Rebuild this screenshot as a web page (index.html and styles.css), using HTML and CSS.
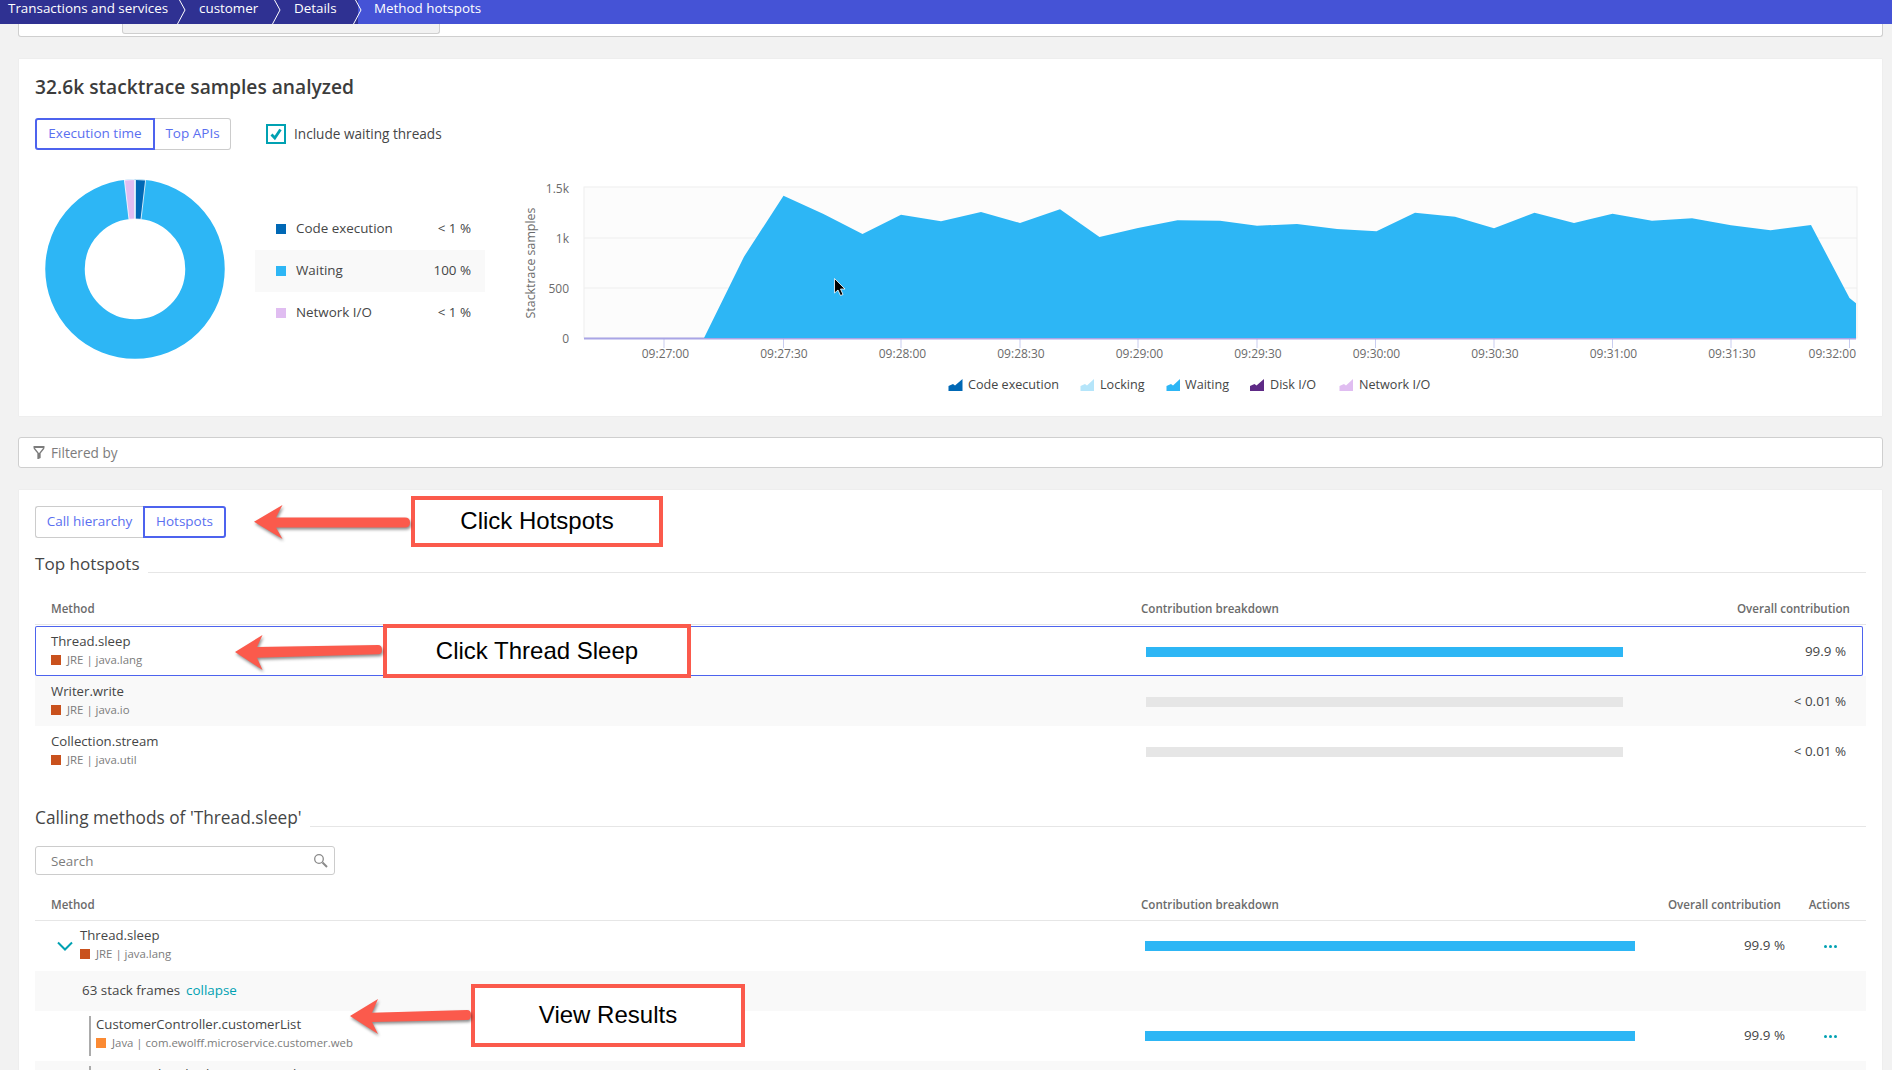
FILE: index.html
```html
<!DOCTYPE html>
<html>
<head>
<meta name="viewport" content="width=device-width, initial-scale=1.0">
<title>Method hotspots</title>
<link rel="stylesheet" href="styles.css">
</head>

<body>

<!-- breadcrumb bar -->
<div class="topbar">
  <div class="crumb crumb-first">Transactions and services</div>
  <div class="crumb crumb-second">customer</div>
  <div class="crumb crumb-third">Details</div>
  <div class="crumb crumb-last">Method hotspots</div>
  <svg class="crumb-lines" width="400" height="24" viewBox="0 0 400 24">
    <path d="M179.500 0L185 10L177.500 24M274.500 0L280 10L272.500 24M355.500 0L361 10L353.500 24" fill="none" stroke="#fff" stroke-width="1"/>
  </svg>
</div>

<div class="page">

  <div class="stub"><div class="stub-chip"></div></div>

  <!-- samples card -->
  <div class="card card-samples">
    <h2 class="card-title">32.6k stacktrace samples analyzed</h2>

    <div class="controls">
      <div class="tabs">
        <div class="tab tab-exec active">Execution time</div>
        <div class="tab tab-apis">Top APIs</div>
      </div>
      <label class="check">
        <span class="checkbox">
          <svg width="16" height="16" viewBox="0 0 16 16"><path d="M3.500 8.500L6.800 12L12.500 3.500" fill="none" stroke="#00a1b2" stroke-width="2.800"/></svg>
        </span>
        <span class="check-label">Include waiting threads</span>
      </label>
    </div>

    <div class="samples-body">
      <svg class="donut" width="180" height="180" viewBox="-90 -90 180 180">
        <circle cx="0" cy="0" r="70" fill="none" stroke="#2db6f5" stroke-width="39.500"/>
        <path d="M0.500 -89.500L10.600 -88.900L6 -49.700L0.400 -50Z" fill="#0068b5" stroke="#fff" stroke-width="0.800"/>
        <path d="M-0.500 -89.500L-10.600 -88.900L-6 -49.700L-0.400 -50Z" fill="#e0bdf1" stroke="#fff" stroke-width="0.800"/>
      </svg>

      <div class="legend">
        <div class="legend-row"><span class="swatch swatch-code"></span><span class="legend-name">Code execution</span><span class="legend-val">&lt; 1 %</span></div>
        <div class="legend-row legend-hover"><span class="swatch swatch-wait"></span><span class="legend-name">Waiting</span><span class="legend-val">100 %</span></div>
        <div class="legend-row"><span class="swatch swatch-net"></span><span class="legend-name">Network I/O</span><span class="legend-val">&lt; 1 %</span></div>
      </div>

      <svg class="chart" width="1382" height="266" viewBox="500 150 1382 266">
        <rect x="584" y="187" width="1273" height="151" fill="#fcfcfc" stroke="#eeeeee"/>
        <path d="M584 238H1857M584 288H1857" stroke="#eeeeee" fill="none"/>
        <path d="M664 339V348M783.500 339V348M901 339V348M1020 339V348M1138 339V348M1257 339V348M1375.500 339V348M1494 339V348M1612.500 339V348M1731 339V348M1849.500 339V348" stroke="#c9cdf0" fill="none"/>
        <path d="M584 338.500H1856" stroke="#a9a5e6" stroke-width="2" fill="none"/>
        <polygon fill="#2db6f5" points="704,338 744,256.700 783.500,195.700 823.500,214 862.500,234 901,214.700 941,221.300 981,212 1020,223 1060,209.300 1099.500,237 1138,228 1177.500,220.300 1220,220.700 1257,225.700 1297,224 1337,229 1376.500,231.300 1415,212.700 1455,216.700 1494,228.300 1534.500,212.700 1574,223 1612.500,213.700 1652,220.700 1692,218.300 1731,225.300 1770.500,230.300 1811,225 1849.500,298 1856,303.300 1856,338"/>
        <path d="M834.500 278.500V293L838 290L840.500 295.500L843 294.500L840.500 289H845Z" fill="#000" stroke="#fff" stroke-width="0.800"/>

        <g class="axis">
          <text x="569" y="193" text-anchor="end">1.5k</text>
          <text x="569" y="243" text-anchor="end">1k</text>
          <text x="569" y="293" text-anchor="end">500</text>
          <text x="569" y="343" text-anchor="end">0</text>
          <text class="axis-title" transform="translate(535 263) rotate(-90)" text-anchor="middle">Stacktrace samples</text>
          <text x="665.500" y="358" text-anchor="middle">09:27:00</text>
          <text x="784" y="358" text-anchor="middle">09:27:30</text>
          <text x="902.500" y="358" text-anchor="middle">09:28:00</text>
          <text x="1021" y="358" text-anchor="middle">09:28:30</text>
          <text x="1139.500" y="358" text-anchor="middle">09:29:00</text>
          <text x="1258" y="358" text-anchor="middle">09:29:30</text>
          <text x="1376.500" y="358" text-anchor="middle">09:30:00</text>
          <text x="1495" y="358" text-anchor="middle">09:30:30</text>
          <text x="1613.500" y="358" text-anchor="middle">09:31:00</text>
          <text x="1732" y="358" text-anchor="middle">09:31:30</text>
          <text x="1856" y="358" text-anchor="end">09:32:00</text>
        </g>

        <g class="chart-legend">
          <path d="M948.500 391V386L953 384L955 385.500L962.500 379V391Z" fill="#0068b5"/>
          <text x="968" y="389">Code execution</text>
          <path d="M1080.500 391V386L1085 384L1087 385.500L1094 379V391Z" fill="#b5e5fa"/>
          <text x="1100" y="389">Locking</text>
          <path d="M1166.500 391V386L1171 384L1173 385.500L1180 379V391Z" fill="#2db6f5"/>
          <text x="1185" y="389">Waiting</text>
          <path d="M1250 391V386L1254.500 384L1256.500 385.500L1264 379V391Z" fill="#5e2a86"/>
          <text x="1270" y="389">Disk I/O</text>
          <path d="M1339.500 391V386L1344 384L1346 385.500L1353 379V391Z" fill="#e0bdf1"/>
          <text x="1359" y="389">Network I/O</text>
        </g>
      </svg>
    </div>
  </div>

  <!-- filter -->
  <div class="filter">
    <svg width="12" height="13" viewBox="0 0 12 13"><path d="M0.500 1H11.500" stroke="#7c7c7c" stroke-width="2" fill="none"/><path d="M1 2L5 7V12.500L7 11.500V7L11 2" fill="none" stroke="#7c7c7c" stroke-width="1.300"/><path d="M5 7H7V11.500L5 12.500Z" fill="#7c7c7c"/></svg>
    <span>Filtered by</span>
  </div>

  <!-- hotspots card -->
  <div class="card card-hotspots">
    <div class="tabs">
      <div class="tab tab-call">Call hierarchy</div>
      <div class="tab tab-hot active">Hotspots</div>
    </div>

    <div class="section-title section-top"><span>Top hotspots</span><i></i></div>

    <div class="row-top head">
      <div>Method</div>
      <div>Contribution breakdown</div>
      <div class="num">Overall contribution</div>
    </div>

    <div class="row-top row selected">
      <div class="method">
        <div class="name">Thread.sleep</div>
        <div class="sub"><span class="tech tech-jre"></span>JRE | java.lang</div>
      </div>
      <div class="bar bar-top"></div>
      <div class="num val">99.9 %</div>
    </div>
    <div class="row-top row shaded">
      <div class="method">
        <div class="name">Writer.write</div>
        <div class="sub"><span class="tech tech-jre"></span>JRE | java.io</div>
      </div>
      <div class="bar bar-top bar-empty"></div>
      <div class="num val">&lt; 0.01 %</div>
    </div>
    <div class="row-top row">
      <div class="method">
        <div class="name">Collection.stream</div>
        <div class="sub"><span class="tech tech-jre"></span>JRE | java.util</div>
      </div>
      <div class="bar bar-top bar-empty"></div>
      <div class="num val">&lt; 0.01 %</div>
    </div>

    <div class="section-title section-calling"><span>Calling methods of 'Thread.sleep'</span><i></i></div>

    <div class="search">
      <span>Search</span>
      <svg width="16" height="16" viewBox="0 0 16 16"><circle cx="6" cy="6" r="4.300" fill="none" stroke="#8a8a8a" stroke-width="1.300"/><path d="M9.500 9.500L14 14" stroke="#8a8a8a" stroke-width="2"/></svg>
    </div>

    <div class="row-call head">
      <div>Method</div>
      <div>Contribution breakdown</div>
      <div class="num head-overall">Overall contribution</div>
      <div class="num">Actions</div>
    </div>

    <div class="row-call row">
      <div class="method method-open">
        <svg class="chevron" width="16" height="10" viewBox="0 0 16 10"><path d="M1 1.500L8 8.500L15 1.500" fill="none" stroke="#00a1b2" stroke-width="2"/></svg>
        <div class="method-text">
          <div class="name">Thread.sleep</div>
          <div class="sub"><span class="tech tech-jre"></span>JRE | java.lang</div>
        </div>
      </div>
      <div class="bar bar-call"></div>
      <div class="num val">99.9 %</div>
      <div class="actions"><span class="dots"><b></b><b></b><b></b></span></div>
    </div>

    <div class="frames"><span>63 stack frames</span><a class="collapse">collapse</a></div>

    <div class="row-call row">
      <div class="method method-frame">
        <div class="name">CustomerController.customerList</div>
        <div class="sub"><span class="tech tech-java"></span>Java | com.ewolff.microservice.customer.web</div>
      </div>
      <div class="bar bar-call"></div>
      <div class="num val">99.9 %</div>
      <div class="actions"><span class="dots"><b></b><b></b><b></b></span></div>
    </div>

    <div class="row-call row shaded">
      <div class="method method-frame">
        <div class="name">GeneratedMethodAccessor.invoke</div>
      </div>
    </div>
  </div>
</div>

<!-- red callouts drawn over the screenshot -->
<div class="note note-hotspots">Click Hotspots</div>
<div class="note note-thread">Click Thread Sleep</div>
<div class="note note-results">View Results</div>

<svg class="arrows" width="800" height="1070" viewBox="0 0 800 1070">
  <path d="M254 521.700L282.500 505L276 517.500H405Q410 517.500 410 522.500Q410 527.500 405 527.500H276L282.500 539Z"/>
  <path d="M235 652L262.500 635L257 647L378 645Q382 645 382 650Q382 654.300 378 654.300L257 657.700L262.500 670Z"/>
  <path d="M350 1016L378 999L372 1012.700L467 1010Q471 1010 471 1015Q471 1020 467 1020L372 1022L378 1034Z"/>
</svg>

</body>
</html>
```

FILE: styles.css
```css
* {box-sizing: border-box;}

html, body {
  height: 1070px;
  overflow: hidden;
}

body {
  margin: 0;
  background-color: #f2f2f2;
  color: #454646;
  font-family: "Open Sans", sans-serif;
  font-size: 13.400px;
}

/* top bar */

.topbar {
  display: flex;
  height: 24px;
  background-color: #2f3192;
  color: #fff;
  font-size: 13.400px;
  line-height: 17px;
  position: relative;
  z-index: 2;
}

.crumb {
  flex: none;
  padding-left: 8px;
}

.crumb-first {width: 191px;}
.crumb-second {width: 95px;}
.crumb-third {width: 72px;}

.crumb-last {
  flex: 1;
  padding-left: 16px;
  background-color: #4553d6;
}

.crumb-lines {
  position: absolute;
  left: 0;
  top: 0;
}

.page {
  padding: 0 10px 0 19px;
}

.stub {
  height: 13px;
  margin: 0 -1px;
  background-color: #fff;
  border: 1px solid #cfcfcf;
  border-top: none;
  border-radius: 0 0 3px 3px;
  padding-left: 103px;
}

.stub-chip {
  width: 318px;
  height: 10px;
  background-color: #f2f2f2;
  border: 1px solid #cfcfcf;
  border-top: none;
  border-radius: 0 0 3px 3px;
}

/* cards */

.card {
  background-color: #fff;
  box-shadow: 0 0 1px #dcdcdc;
}

.card-samples {
  height: 357px;
  margin-top: 22px;
  padding: 16px 0 0 16px;
}

.card-title {
  margin: 0;
  font-size: 19.200px;
  font-weight: 600;
  line-height: 24px;
  color: #3c3c3c;
}

.controls {
  display: flex;
  align-items: center;
  gap: 35px;
  margin-top: 19px;
}

.tabs {
  display: flex;
  height: 32px;
  font-size: 13.500px;
  color: #5a6ff0;
}

.tab {
  display: flex;
  align-items: center;
  justify-content: center;
  padding-bottom: 2px;
  border: 1px solid #cccccc;
}

.tab.active {
  border: 2px solid #4d63ee;
}

.tab-exec {width: 120px; border-radius: 3px 0 0 3px;}
.tab-apis {width: 76px; border-left: none; border-radius: 0 3px 3px 0;}
.tab-call {width: 108px; border-right: none; border-radius: 3px 0 0 3px;}
.tab-hot {width: 83px; border-radius: 0 3px 3px 0;}

.check {
  display: flex;
  align-items: center;
  gap: 8px;
  font-size: 13.600px;
}

.check-label {padding-bottom: 2px;}

.checkbox {
  display: flex;
  align-items: center;
  justify-content: center;
  width: 20px;
  height: 20px;
  border: 2px solid #00a1b2;
}

.samples-body {
  display: flex;
  align-items: flex-start;
}

.donut {
  flex: none;
  margin: 29px 0 0 10px;
}

.legend {
  flex: none;
  width: 230px;
  margin: 58px 0 0 30px;
  font-size: 13.400px;
}

.legend-row {
  display: flex;
  align-items: center;
  height: 42px;
  padding: 0 14px 0 21px;
}

.legend-hover {background-color: #f9f9f9;}

.swatch {
  width: 10px;
  height: 10px;
  margin-right: 10px;
}

.swatch-code {background-color: #0068b5;}
.swatch-wait {background-color: #2db6f5;}
.swatch-net {background-color: #e0bdf1;}

.legend-name {padding-bottom: 2px;}

.legend-val {
  margin-left: auto;
  padding-bottom: 2px;
}

.chart {
  flex: none;
  margin-left: 15px;
}

.axis text {
  font-size: 12px;
  fill: #6b6b6b;
}

.axis .axis-title {font-size: 12.400px;}

.chart-legend text {
  font-size: 12.600px;
  fill: #454646;
}

/* filter */

.filter {
  display: flex;
  align-items: center;
  gap: 6px;
  height: 31px;
  margin: 21px -1px 0;
  padding: 0 0 1px 14px;
  background-color: #fff;
  border: 1px solid #cfcfcf;
  border-radius: 3px;
  color: #7c7c7c;
  font-size: 13.600px;
}

/* hotspots */

.card-hotspots {
  height: 620px;
  margin-top: 22px;
  padding: 16px 16px 0;
}

.section-title {
  display: flex;
  gap: 8px;
  font-size: 17.100px;
  line-height: 24px;
}

.section-title i {
  flex: 1;
  height: 21px;
  border-bottom: 1px solid #e6e6e6;
}

.section-top {margin-top: 14px;}

.section-calling {
  margin-top: 30px;
  font-size: 17.300px;
}

.row-top,
.row-call {
  display: grid;
  align-items: center;
  padding-left: 16px;
}

.row-top {
  grid-template-columns: 1090px 482px 1fr;
  padding-right: 16px;
}

.row-call {
  grid-template-columns: 1090px 494px 150px 65px;
  padding-right: 16px;
}

.head {
  height: 33px;
  border-bottom: 1px solid #e6e6e6;
  color: #6b6b6b;
  font-size: 11.600px;
  font-weight: 600;
}

.row-top.head {margin-top: 16px;}
.row-call.head {margin-top: 13px;}

.head-overall {padding-right: 4px;}

.num {text-align: right;}

.row {height: 50px;}

.row-top.row {padding-right: 20px;}

.row-top.selected {
  margin: 1px 3px 0 0;
  height: 50px;
  padding-right: 17px;
  border-radius: 2px;
  box-shadow: inset 0 0 0 1px #4d63ee;
}

.shaded {background-color: #f9f9f9;}

.row-top .method {padding-bottom: 2px;}

.method-text {padding-bottom: 5px;}

.row-call .val {padding-bottom: 2px;}

.name {
  font-size: 13.200px;
  line-height: 18px;
  white-space: nowrap;
}

.sub {
  display: flex;
  align-items: center;
  line-height: 16px;
  margin-top: 2px;
  color: #7c7c7c;
  font-size: 11.400px;
  white-space: nowrap;
}

.tech {
  width: 10px;
  height: 10px;
  margin-right: 6px;
}

.tech-jre {background-color: #c9511d;}
.tech-java {background-color: #fb8a33;}

.bar {
  height: 10px;
  background-color: #2db6f5;
}

.bar-top {margin: 1px 0 0 5px; width: 477px;}
.bar-call {margin-left: 4px; width: 490px;}
.bar-empty {background-color: #e6e6e6;}

.search {
  display: flex;
  align-items: center;
  justify-content: space-between;
  width: 300px;
  height: 29px;
  margin-top: 16px;
  padding: 0 5px 0 15px;
  border: 1px solid #cccccc;
  border-radius: 3px;
  color: #7c7c7c;
}

.method-open {
  display: flex;
  align-items: center;
  gap: 7px;
  padding-left: 6px;
}

.frames {
  display: flex;
  align-items: center;
  gap: 6px;
  height: 40px;
  padding: 0 0 2px 47px;
  background-color: #f9f9f9;
}

.collapse {color: #00a1b2;}

.method-frame {
  height: 40px;
  margin-left: 38px;
  padding-left: 5px;
  border-left: 2px solid #ababab;
}

.method-frame .name {margin-top: -1px;}

.actions {
  display: flex;
  justify-content: flex-end;
}

.dots {
  display: flex;
  gap: 2px;
  margin-right: 13px;
}

.dots b {
  width: 3px;
  height: 3px;
  border-radius: 50%;
  background-color: #00a1b2;
}

/* callouts */

.note {
  position: absolute;
  display: flex;
  align-items: center;
  justify-content: center;
  background-color: #fff;
  border: 4px solid #fb5a4c;
  color: #000;
  font-family: "Liberation Sans", Arial, sans-serif;
  font-size: 24px;
}

.note-hotspots {left: 411px; top: 496px; width: 252px; height: 51px; padding-bottom: 2px;}
.note-thread {left: 383px; top: 624px; width: 308px; height: 54px;}
.note-results {left: 471px; top: 984px; width: 274px; height: 63px; padding-bottom: 2px;}

.arrows {
  position: absolute;
  left: 0;
  top: 0;
}

.arrows path {
  fill: #fb5a4c;
  filter: drop-shadow(1px 2px 1.500px rgba(0, 0, 0, 0.45));
}
```
